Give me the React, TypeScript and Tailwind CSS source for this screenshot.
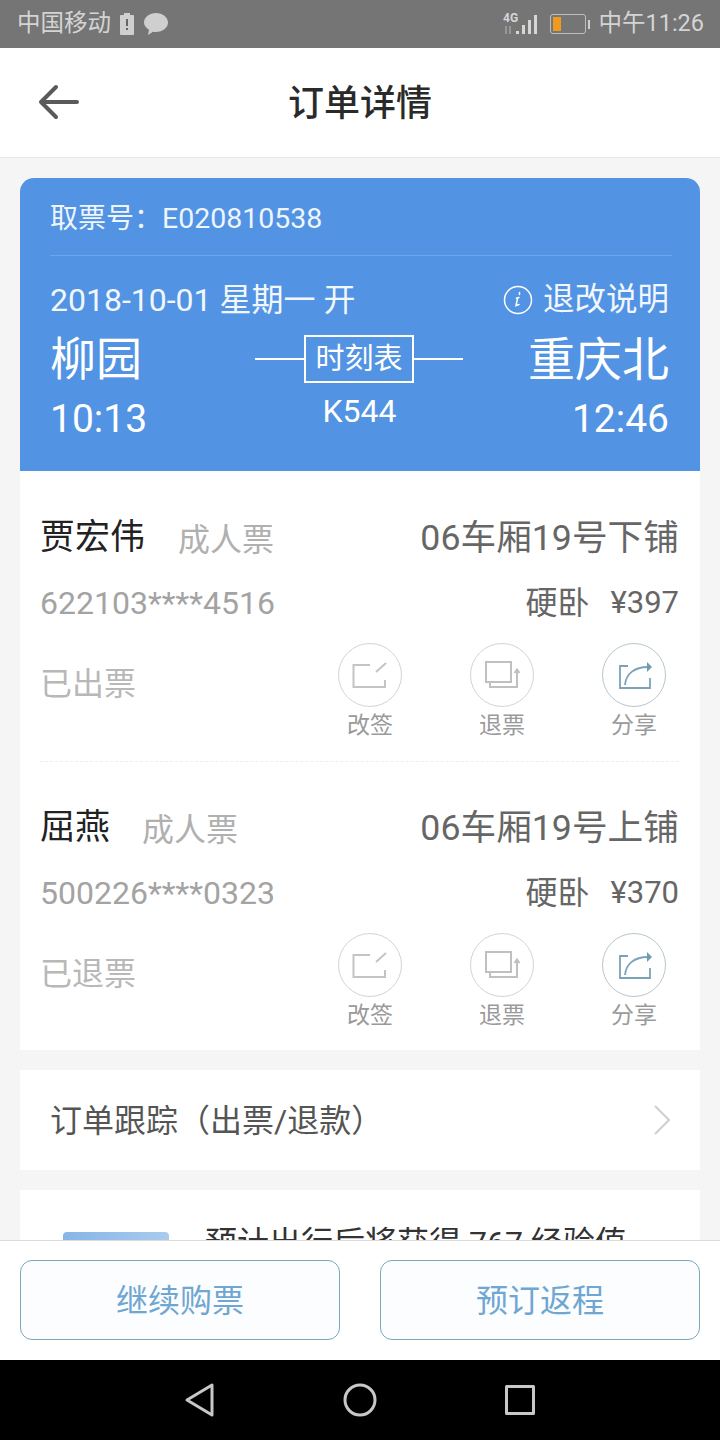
const FONT = "font-['Roboto','Noto_Sans_CJK_SC',sans-serif]";

function EditIcon() {
  return (
    <svg width="36" height="30" viewBox="0 0 36 30" fill="none" stroke="#c4c4c4" strokeWidth="2">
      <path d="M18 5H1.500v22H33v-7" />
      <path d="M24 12 34 3" />
    </svg>
  );
}

function RefundIcon() {
  return (
    <svg width="36" height="30" viewBox="0 0 36 30" fill="none" stroke="#c0c0c0" strokeWidth="2">
      <path d="M2 2h25v20H2z" />
      <path d="M6 22v5h27V11" />
      <path d="m30.500 13 2.500-3.500 2.500 3.500" />
    </svg>
  );
}

function ShareIcon() {
  return (
    <svg width="36" height="30" viewBox="0 0 36 30" fill="none" stroke="#7ba3b8" strokeWidth="1.800">
      <path d="M12 6H4v22h30V18" />
      <path d="M9 25c1-11 9-18 23-18" />
      <path d="m31 2 5 5-5 5z" fill="#6f9bb3" stroke="none" />
    </svg>
  );
}

function Action({ label, active, children }: { label: string; active?: boolean; children: React.ReactNode }) {
  return (
    <div className="flex w-[64px] flex-col items-center">
      <div className={`flex h-[64px] w-[64px] items-center justify-center rounded-full border ${active ? "border-[#b9c6cd]" : "border-[#d4d4d4]"}`}>
        {children}
      </div>
      <span className="mt-[3px] text-[23px] leading-[32px] text-[#9a9a9a]">{label}</span>
    </div>
  );
}

function Passenger({ name, type, seat, id, berth, price, status, gap }: {
  name: string;
  type: string;
  seat: string;
  id: string;
  berth: string;
  price: string;
  status: string;
  gap: string;
}) {
  return (
    <div className="flex flex-col">
      <div className="flex h-[46px] items-center justify-between pt-[1px]">
        <div className={`flex items-center ${gap}`}>
          <span className="text-[35px] text-[#222]">{name}</span>
          <span className="mt-[2px] text-[32px] text-[#b0b0b0]">{type}</span>
        </div>
        <span className="text-[35.700px] text-[#666]">{seat}</span>
      </div>
      <div className="mt-[19px] flex h-[46px] items-center justify-between">
        <span className="text-[32px] text-[#a3a3a3]">{id}</span>
        <div className="flex items-center gap-[21px] text-[32px] text-[#666]">
          <span>{berth}</span>
          <span className="text-[31px]">{price}</span>
        </div>
      </div>
      <div className="mt-[17px] flex items-start justify-between pr-[13px]">
        <span className="mt-[18px] text-[32px] leading-[46px] text-[#b8b8b8]">{status}</span>
        <div className="flex gap-[68px]">
          <Action label="改签"><EditIcon /></Action>
          <Action label="退票"><RefundIcon /></Action>
          <Action label="分享" active><ShareIcon /></Action>
        </div>
      </div>
    </div>
  );
}

export default function App() {
  return (
    <div className={`flex h-[1440px] w-[720px] flex-col overflow-hidden bg-[#f5f5f5] ${FONT}`}>
      {/* status bar */}
      <div className="flex h-[48px] shrink-0 items-center justify-between bg-[#757575] pl-[17px] pr-[16px] text-[23.500px] text-[#d4d4d4]">
        <div className="flex items-center">
          <span>中国移动</span>
          <svg className="ml-[9px]" width="14" height="22" viewBox="0 0 14 22">
            <path d="M4 0h6v2h3a1 1 0 0 1 1 1v18a1 1 0 0 1-1 1H1a1 1 0 0 1-1-1V3a1 1 0 0 1 1-1h3z" fill="#cfcfcf" />
            <path d="M6 6h2v7H6zM6 15h2v2H6z" fill="#666" />
          </svg>
          <svg className="ml-[10px]" width="24" height="22" viewBox="0 0 24 22">
            <path d="M12 0c6.600 0 12 4.300 12 9.500S18.600 19 12 19c-1 0-2 0-3-.3L4 22l1-5.200C2 15 0 12.500 0 9.500 0 4.300 5.400 0 12 0z" fill="#cfcfcf" />
          </svg>
        </div>
        <div className="flex items-center">
          <svg width="40" height="24" viewBox="0 0 40 24" fill="#d6d6d6">
            <text x="1" y="10" fontSize="12" fontWeight="700" fontFamily="Roboto">4G</text>
            <path d="M3 14h2v8H3zM7 14h2v8H7z" opacity="0.35" />
            <path d="M14 19h3v3h-3zM20 13h3v9h-3zM26 8h3v14h-3zM32 3h3v19h-3z" />
          </svg>
          <div className="ml-[8px] flex h-[20px] w-[36px] items-center rounded-[3px] border border-[#bdbdbd] p-[2px]">
            <div className="h-full w-[8px] bg-[#f09a1f]" />
          </div>
          <div className="ml-[2px] h-[9px] w-[2px] bg-[#cfcfcf]" />
          <span className="ml-[8px]">中午11:26</span>
        </div>
      </div>

      {/* header */}
      <div className="relative flex h-[110px] shrink-0 items-center justify-center border-b border-[#e6e6e6] bg-white pt-[3px]">
        <svg className="absolute left-[38px] top-[36px]" width="42" height="36" viewBox="0 0 42 36" fill="none" stroke="#5a5a5a" strokeWidth="4" strokeLinecap="round" strokeLinejoin="round">
          <path d="M18 3 3 18l15 15M3 18h36" />
        </svg>
        <span className="text-[36px] font-medium text-[#2a2a2a]">订单详情</span>
      </div>

      {/* scrolling content */}
      <div className="flex min-h-0 flex-1 flex-col overflow-hidden px-[20px] pt-[20px]">
        <div className="h-[293px] shrink-0 rounded-t-[14px] bg-[#5293e3] pl-[30px] pr-[28px] text-white">
          <div className="flex h-[78px] items-center border-b border-[#6ea6ea] pt-[5px] text-[28px] text-[#eef5fd]">
            <span>取票号：</span>
            <span className="text-[28.500px]">E020810538</span>
          </div>
          <div className="mt-[24px] flex h-[40px] items-center justify-between pr-[3px] text-[32px] text-[#f2f7fe]">
            <span>2018-10-01 星期一 开</span>
            <div className="flex items-center gap-[10px]">
              <svg width="30" height="30" viewBox="0 0 30 30" fill="none" stroke="#fff" strokeWidth="1.500">
                <circle cx="15" cy="15" r="13.500" />
                <path d="M16.500 7.500v2M16 12.500l-3 .7 1.500.3-1.500 7 3-1" strokeLinecap="round" />
              </svg>
              <span className="text-[31.500px]">退改说明</span>
            </div>
          </div>
          <div className="relative mt-[11px] flex h-[56px] items-center justify-between pr-[3px] text-[46px] leading-none">
            <span>柳园</span>
            <span className="text-[47px]">重庆北</span>
            <div className="absolute left-[205px] top-[4px] flex w-[208px] items-center">
              <div className="h-[2px] flex-1 bg-white" />
              <div className="flex h-[48px] w-[110px] items-center justify-center border-2 border-white text-[29px] leading-none">时刻表</div>
              <div className="h-[2px] flex-1 bg-white" />
            </div>
          </div>
          <div className="mt-[9px] flex h-[46px] items-center justify-between pr-[3px] text-[39px] leading-none">
            <span>10:13</span>
            <span className="-mt-[17px] text-[32px]">K544</span>
            <span>12:46</span>
          </div>
        </div>

        <div className="flex h-[579px] shrink-0 flex-col bg-white pl-[20px] pr-[21px] pt-[44px]">
          <Passenger name="贾宏伟" type="成人票" seat="06车厢19号下铺" id="622103****4516" berth="硬卧" price="¥397" status="已出票" gap="gap-[33px]" />
          <div className="mb-[43px] mt-[19px] border-t border-dashed border-[#eeeeee]" />
          <Passenger name="屈燕" type="成人票" seat="06车厢19号上铺" id="500226****0323" berth="硬卧" price="¥370" status="已退票" gap="gap-[32px]" />
        </div>

        <div className="mt-[20px] flex h-[100px] shrink-0 items-center justify-between bg-white pl-[30px] pr-[30px]">
          <span className="pt-[2px] text-[32px] text-[#555]">订单跟踪（出票/退款）</span>
          <svg width="16" height="30" viewBox="0 0 16 30" fill="none" stroke="#cfcfcf" strokeWidth="2">
            <path d="m1 1 14 14L1 29" />
          </svg>
        </div>

        <div className="mt-[20px] flex h-[200px] shrink-0 items-start bg-white pl-[43px] pt-[33px]">
          <div className="mt-[9px] h-[80px] w-[106px] rounded-[4px] bg-linear-to-r from-[#86b5e7] to-[#a9cbee]" />
          <span className="ml-[36px] text-[32px] leading-[40px] text-[#333]">预计出行后将获得 767 经验值</span>
        </div>
      </div>

      {/* bottom actions */}
      <div className="flex h-[120px] shrink-0 gap-[40px] border-t border-[#dcdcdc] bg-white px-[20px] pt-[19px]">
        <button className="h-[80px] flex-1 rounded-[12px] border border-[#7fa6b8] bg-[#fbfdfe] pt-[2px] text-[32px] text-[#6fa6d2]">继续购票</button>
        <button className="h-[80px] flex-1 rounded-[12px] border border-[#7fa6b8] bg-[#fbfdfe] pt-[2px] text-[32px] text-[#6fa6d2]">预订返程</button>
      </div>

      {/* android nav */}
      <div className="flex h-[80px] shrink-0 items-center justify-center gap-[127px] bg-black">
        <svg width="32" height="36" viewBox="0 0 32 36" fill="none" stroke="#c8c8c8" strokeWidth="3" strokeLinejoin="round">
          <path d="M28 3v30L3 18z" />
        </svg>
        <svg width="34" height="34" viewBox="0 0 34 34" fill="none" stroke="#c8c8c8" strokeWidth="3">
          <circle cx="17" cy="17" r="15" />
        </svg>
        <svg width="32" height="32" viewBox="0 0 32 32" fill="none" stroke="#c8c8c8" strokeWidth="3" strokeLinejoin="round">
          <path d="M2.500 2.500h27v27h-27z" />
        </svg>
      </div>
    </div>
  );
}
